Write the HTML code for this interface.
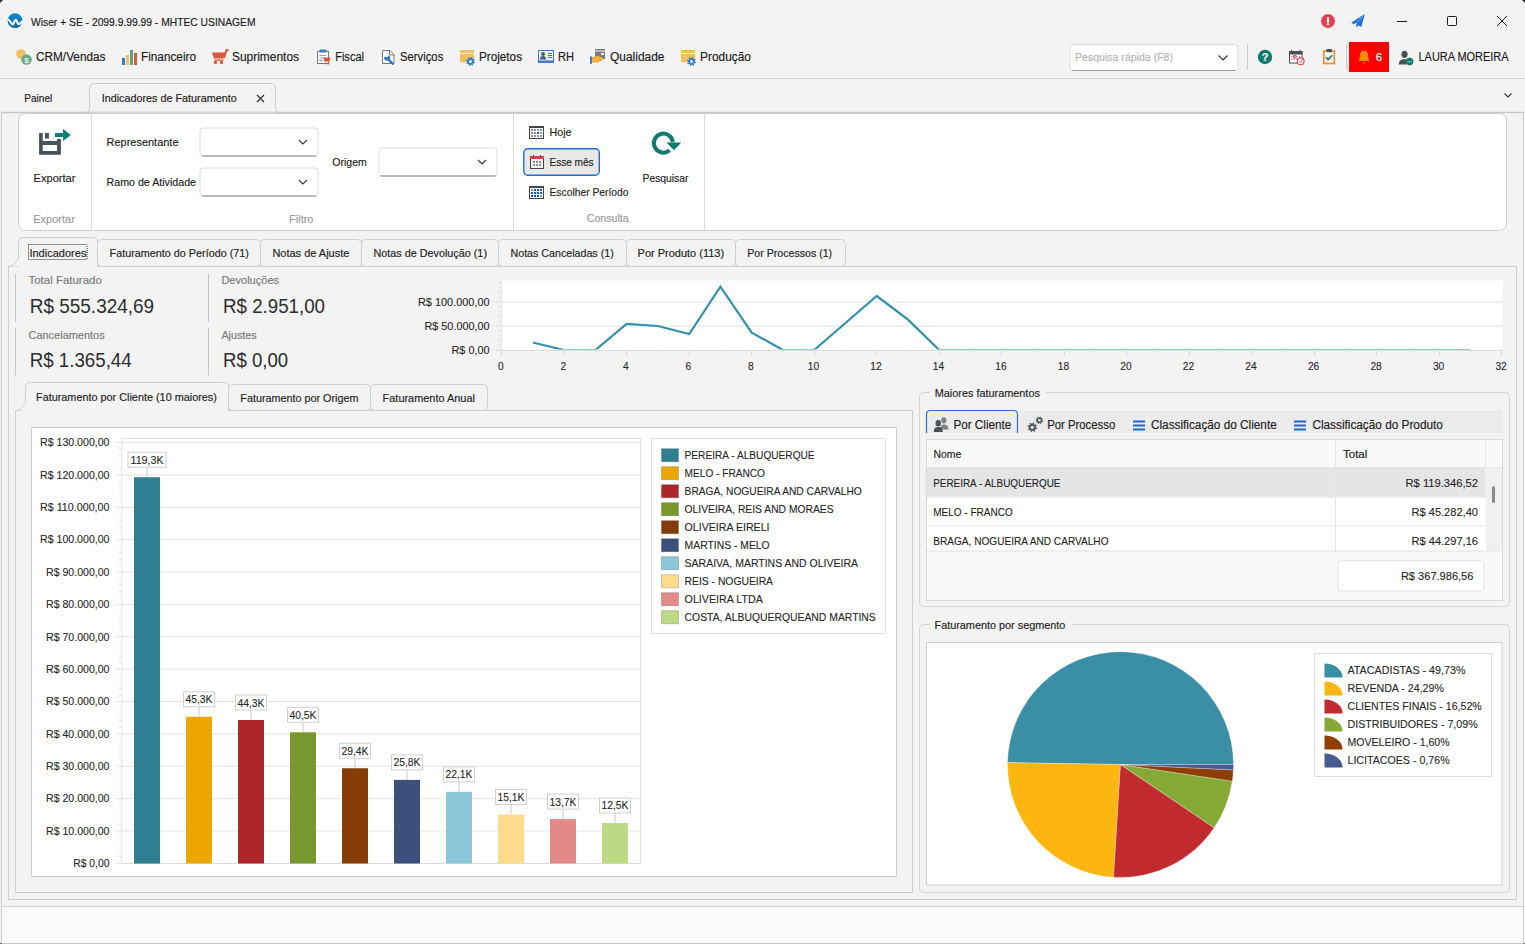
<!DOCTYPE html>
<html><head><meta charset="utf-8"><style>
html,body{margin:0;padding:0;background:#f3f3f3;overflow:hidden}
svg{display:block}
text{font-family:'Liberation Sans', sans-serif;white-space:pre}
</style></head><body>
<svg width="1525" height="944" viewBox="0 0 1525 944">
<rect x="0" y="0" width="1525" height="944" fill="#f3f3f3" />
<defs><linearGradient id="lg" x1="0" y1="0" x2="0" y2="1"><stop offset="0" stop-color="#0b8bd0"/><stop offset="1" stop-color="#0a66ad"/></linearGradient></defs>
<circle cx="15.05" cy="20.65" r="7.45" fill="url(#lg)"/>
<clipPath id="logoclip"><circle cx="15.05" cy="20.65" r="7.45"/></clipPath>
<path d="M7,19.6 C10.5,19 10.8,24.6 12.6,24.4 C14.3,24.2 14.3,19.6 15.8,19.7 C17.2,19.8 17.2,24.5 19,24.2 C20.5,24 21.5,22 23,20.5" fill="none" stroke="#fff" stroke-width="2.1" clip-path="url(#logoclip)"/>
<text x="31" y="26" font-size="11.4" fill="#1b1b1b" stroke="#1b1b1b" stroke-width="0.17" textLength="224.5" lengthAdjust="spacingAndGlyphs" >Wiser + SE - 2099.9.99.99 - MHTEC USINAGEM</text>
<circle cx="1328" cy="21" r="7" fill="#e0434f"/>
<rect x="1327" y="17.3" width="2" height="5.2" fill="#fff" />
<rect x="1327" y="23.3" width="2" height="1.8" fill="#fff" />
<path d="M1364.9,14 L1351.4,22.4 L1353.2,23.9 L1356.6,22.9 L1356.1,27.6 L1358.6,25.6 L1361.3,26.9 Z" fill="#1a73d9" />
<path d="M1356.6,22.6 L1363.5,16" fill="none" stroke="#cfe0f7" stroke-width="0.6" />
<line x1="1397" y1="21.5" x2="1407" y2="21.5" stroke="#1b1b1b" stroke-width="1" />
<rect x="1447.5" y="16.5" width="9" height="9" fill="none" stroke="#1b1b1b" stroke-width="1" rx="1" />
<line x1="1497" y1="16" x2="1507" y2="26" stroke="#1b1b1b" stroke-width="1" />
<line x1="1507" y1="16" x2="1497" y2="26" stroke="#1b1b1b" stroke-width="1" />
<circle cx="21" cy="54" r="4.8" fill="#f0c060"/>
<circle cx="26.5" cy="59.5" r="5.2" fill="#6aa88c"/>
<text x="26.5" y="62.5" font-size="8" fill="#fff" stroke="#fff" stroke-width="0.1" text-anchor="middle" >$</text>
<text x="36" y="61" font-size="12.5" fill="#1b1b1b" stroke="#1b1b1b" stroke-width="0.17" textLength="69.5" lengthAdjust="spacingAndGlyphs" >CRM/Vendas</text>
<rect x="122" y="58" width="3" height="7" fill="#3a78c0" />
<rect x="126" y="55" width="3" height="10" fill="#f0c060" />
<rect x="130" y="50" width="3" height="15" fill="#5fa080" />
<rect x="134" y="53" width="3" height="12" fill="#d9573b" />
<text x="141" y="61" font-size="12.5" fill="#1b1b1b" stroke="#1b1b1b" stroke-width="0.17" textLength="55" lengthAdjust="spacingAndGlyphs" >Financeiro</text>
<path d="M212,52.5 L225.5,52.5 L223.5,58.5 L214,58.5 Z" fill="#d9573b" />
<rect x="214.5" y="59.5" width="9" height="1.3" fill="#d9573b" />
<path d="M224,58 L226.5,50 L228.5,50" fill="none" stroke="#d9573b" stroke-width="2" />
<circle cx="215.5" cy="62.5" r="1.7" fill="#d9573b"/><circle cx="221.5" cy="62.5" r="1.7" fill="#d9573b"/>
<text x="232" y="61" font-size="12.5" fill="#1b1b1b" stroke="#1b1b1b" stroke-width="0.17" textLength="67" lengthAdjust="spacingAndGlyphs" >Suprimentos</text>
<rect x="317.5" y="51.5" width="11" height="12" fill="#fafafa" stroke="#7a7a7a" stroke-width="1" />
<rect x="319.5" y="49.5" width="7" height="3" fill="#3d7bc8" rx="0.8" />
<line x1="319.5" y1="55.5" x2="326" y2="55.5" stroke="#a0a0a0" stroke-width="1" />
<line x1="319.5" y1="58" x2="324" y2="58" stroke="#a0a0a0" stroke-width="1" />
<line x1="319.5" y1="60.5" x2="323" y2="60.5" stroke="#a0a0a0" stroke-width="1" />
<path d="M323.5,57.5 L330.5,57.5 L329.5,61.5 L324.5,61.5 Z" fill="#d9573b" />
<circle cx="325.5" cy="63.5" r="0.9" fill="#d9573b"/><circle cx="328.5" cy="63.5" r="0.9" fill="#d9573b"/>
<text x="335.2" y="61" font-size="12.5" fill="#1b1b1b" stroke="#1b1b1b" stroke-width="0.17" textLength="28.8" lengthAdjust="spacingAndGlyphs" >Fiscal</text>
<path d="M382.5,50.5 L390,50.5 L394,54.5 L394,63.5 L382.5,63.5 Z" fill="#fafafa" stroke="#7a7a7a" stroke-width="1" />
<path d="M389.5,50.5 L389.5,55 L394,55" fill="none" stroke="#7a7a7a" stroke-width="1" />
<path d="M387,58 L393.5,64.5" fill="none" stroke="#2f74c8" stroke-width="2.4" />
<path d="M384.2,57.2 A3,3 0 1 0 388.8,55.2 L387.2,57.6 L385.4,56.6 Z" fill="#2f74c8" />
<text x="400" y="61" font-size="12.5" fill="#1b1b1b" stroke="#1b1b1b" stroke-width="0.17" textLength="43.3" lengthAdjust="spacingAndGlyphs" >Serviços</text>
<rect x="460" y="50" width="14" height="3" fill="#f0c060" />
<rect x="460" y="53.8" width="14" height="8.4" fill="#f0c060" />
<polygon points="475.01,62.40 474.75,63.26 473.24,63.33 472.83,63.83 473.06,65.32 472.26,65.75 471.14,64.74 470.50,64.80 469.60,66.01 468.74,65.75 468.67,64.24 468.17,63.83 466.68,64.06 466.25,63.26 467.26,62.14 467.20,61.50 465.99,60.60 466.25,59.74 467.76,59.67 468.17,59.17 467.94,57.68 468.74,57.25 469.86,58.26 470.50,58.20 471.40,56.99 472.26,57.25 472.33,58.76 472.83,59.17 474.32,58.94 474.75,59.74 473.74,60.86 473.80,61.50" fill="#2f7fd0"/>
<circle cx="470.5" cy="61.5" r="1.5" fill="#f3f3f3"/>
<text x="479" y="61" font-size="12.5" fill="#1b1b1b" stroke="#1b1b1b" stroke-width="0.17" textLength="43" lengthAdjust="spacingAndGlyphs" >Projetos</text>
<rect x="538.5" y="50.5" width="15" height="12" fill="#e6eef9" stroke="#3d7bc8" stroke-width="1" />
<rect x="538" y="60.5" width="16" height="2.5" fill="#3d7bc8" />
<circle cx="543" cy="54" r="2" fill="#4d5b78"/>
<path d="M540,59.5 C540,56.5 541.5,56 543,56 C544.5,56 546,56.5 546,59.5 Z" fill="#4d5b78" />
<line x1="548" y1="53.5" x2="552" y2="53.5" stroke="#4d5b78" stroke-width="0.9" />
<line x1="548" y1="55.5" x2="552" y2="55.5" stroke="#4d5b78" stroke-width="0.9" />
<line x1="548" y1="57.5" x2="552" y2="57.5" stroke="#4d5b78" stroke-width="0.9" />
<text x="558" y="61" font-size="12.5" fill="#1b1b1b" stroke="#1b1b1b" stroke-width="0.17" textLength="16" lengthAdjust="spacingAndGlyphs" >RH</text>
<rect x="595" y="49" width="10" height="1.5" fill="#7a7a7a" />
<rect x="595" y="51.5" width="10" height="7.5" fill="#7a7a7a" />
<rect x="601" y="53" width="3" height="2" fill="#eee" />
<path d="M592,57 L598,56 L603,57.5 L603,60 L598,62.5 L592,62.5 Z" fill="#f0b040" />
<rect x="590" y="56.5" width="2" height="7.3" fill="#3d7bc8" />
<text x="610" y="61" font-size="12.5" fill="#1b1b1b" stroke="#1b1b1b" stroke-width="0.17" textLength="54.5" lengthAdjust="spacingAndGlyphs" >Qualidade</text>
<rect x="681" y="50" width="14" height="3" fill="#f0c060" />
<rect x="681" y="53.8" width="14" height="8.4" fill="#f0c060" />
<polygon points="696.01,62.40 695.75,63.26 694.24,63.33 693.83,63.83 694.06,65.32 693.26,65.75 692.14,64.74 691.50,64.80 690.60,66.01 689.74,65.75 689.67,64.24 689.17,63.83 687.68,64.06 687.25,63.26 688.26,62.14 688.20,61.50 686.99,60.60 687.25,59.74 688.76,59.67 689.17,59.17 688.94,57.68 689.74,57.25 690.86,58.26 691.50,58.20 692.40,56.99 693.26,57.25 693.33,58.76 693.83,59.17 695.32,58.94 695.75,59.74 694.74,60.86 694.80,61.50" fill="#2f7fd0"/>
<circle cx="691.5" cy="61.5" r="1.5" fill="#f3f3f3"/>
<text x="700" y="61" font-size="12.5" fill="#1b1b1b" stroke="#1b1b1b" stroke-width="0.17" textLength="51" lengthAdjust="spacingAndGlyphs" >Produção</text>
<rect x="1070" y="44.5" width="168" height="26" fill="#fff" stroke="#dadada" stroke-width="1" rx="3.5" />
<line x1="1072.5" y1="70.5" x2="1235.5" y2="70.5" stroke="#9c9c9c" stroke-width="1" />
<text x="1075" y="61" font-size="11.5" fill="#b3b3b3" stroke="#b3b3b3" stroke-width="0.17" textLength="98" lengthAdjust="spacingAndGlyphs" >Pesquisa rápida (F8)</text>
<path d="M1218.5,55.5 L1223,60 L1227.5,55.5" fill="none" stroke="#333" stroke-width="1.2" />
<line x1="1247.5" y1="44" x2="1247.5" y2="70" stroke="#c8c8c8" stroke-width="1" />
<circle cx="1265" cy="57" r="7.2" fill="#0e7b6c"/>
<text x="1265" y="61.3" font-size="11" fill="#fff" stroke="#fff" stroke-width="0.1" text-anchor="middle" font-weight="bold">?</text>
<rect x="1289.5" y="51.5" width="12.5" height="11.5" fill="#fff" stroke="#4a5055" stroke-width="1" />
<rect x="1289" y="51" width="13.5" height="3.5" fill="#4a5055" />
<rect x="1291" y="49.8" width="1" height="2" fill="#4a5055" />
<rect x="1299.5" y="49.8" width="1" height="2" fill="#4a5055" />
<rect x="1291.0" y="56.0" width="1.4" height="1.4" fill="#9a9ea2" />
<rect x="1293.6" y="56.0" width="1.4" height="1.4" fill="#9a9ea2" />
<rect x="1296.2" y="56.0" width="1.4" height="1.4" fill="#9a9ea2" />
<rect x="1298.8" y="56.0" width="1.4" height="1.4" fill="#9a9ea2" />
<rect x="1291.0" y="58.6" width="1.4" height="1.4" fill="#9a9ea2" />
<rect x="1293.6" y="58.6" width="1.4" height="1.4" fill="#9a9ea2" />
<rect x="1296.2" y="58.6" width="1.4" height="1.4" fill="#9a9ea2" />
<rect x="1298.8" y="58.6" width="1.4" height="1.4" fill="#9a9ea2" />
<rect x="1293.6" y="55.6" width="2.4" height="2.4" fill="none" stroke="#e04050" stroke-width="0.9" />
<circle cx="1300.7" cy="61.3" r="3.4" fill="#fff" stroke="#e8404f" stroke-width="1.1"/>
<path d="M1299.2,61.3 L1300.5,62.5 L1303.8,58.2" fill="none" stroke="#e8404f" stroke-width="0.9" />
<rect x="1323.8" y="51" width="10.5" height="12.5" fill="none" stroke="#f58a1f" stroke-width="1.6" />
<rect x="1326.4" y="49" width="5.6" height="3.2" fill="#4a5055" rx="1" />
<path d="M1325.8,57.2 L1328.2,59.6 L1332.2,55.2" fill="none" stroke="#0e7b6c" stroke-width="1.5" />
<line x1="1346.5" y1="44" x2="1346.5" y2="70" stroke="#c8c8c8" stroke-width="1" />
<rect x="1349" y="42" width="40" height="30" fill="#ff0000" />
<path d="M1358.2,61 C1359.8,59.5 1359.8,57.5 1359.8,55.5 C1359.8,52.5 1361.5,50.5 1364,50.5 C1366.5,50.5 1368.2,52.5 1368.2,55.5 C1368.2,57.5 1368.2,59.5 1369.8,61 Z" fill="#ff8c00" />
<rect x="1363" y="62.6" width="2" height="0.9" fill="#ff8c00" />
<text x="1375.8" y="60.8" font-size="11.5" fill="#fff" stroke="#fff" stroke-width="0.17" textLength="6.3" lengthAdjust="spacingAndGlyphs" >6</text>
<ellipse cx="1404.5" cy="54.3" rx="3.1" ry="3.6" fill="#4a5055"/>
<path d="M1398.8,64.5 C1398.8,61 1400.5,59.2 1404.5,59.2 C1407,59.2 1408,59.8 1408.5,60.5 L1406,64.5 Z" fill="#4a5055" />
<circle cx="1409.6" cy="61.6" r="3.8" fill="#0e7b6c"/>
<circle cx="1408.0" cy="61.8" r="0.55" fill="#fff"/>
<circle cx="1409.6" cy="61.8" r="0.55" fill="#fff"/>
<circle cx="1411.1999999999998" cy="61.8" r="0.55" fill="#fff"/>
<text x="1418.5" y="61" font-size="12.5" fill="#1b1b1b" stroke="#1b1b1b" stroke-width="0.17" textLength="90" lengthAdjust="spacingAndGlyphs" >LAURA MOREIRA</text>
<line x1="0" y1="78.5" x2="1525" y2="78.5" stroke="#d4d4d4" stroke-width="1" />
<text x="24.3" y="102" font-size="11.8" fill="#1b1b1b" stroke="#1b1b1b" stroke-width="0.17" textLength="28" lengthAdjust="spacingAndGlyphs" >Painel</text>
<path d="M85.5,112.5 Q89.5,112.5 89.5,108.5 L89.5,88.5 Q89.5,83.5 94.5,83.5 L270.5,83.5 Q275.5,83.5 275.5,88.5 L275.5,108.5 Q275.5,112.5 279.5,112.5" fill="#f3f3f3" stroke="#cdcdcd" stroke-width="1" />
<text x="101.7" y="102" font-size="11.8" fill="#1b1b1b" stroke="#1b1b1b" stroke-width="0.17" textLength="135" lengthAdjust="spacingAndGlyphs" >Indicadores de Faturamento</text>
<line x1="257" y1="95" x2="264" y2="102" stroke="#333" stroke-width="1.2" />
<line x1="264" y1="95" x2="257" y2="102" stroke="#333" stroke-width="1.2" />
<path d="M1504.5,93.5 L1508,97 L1511.5,93.5" fill="none" stroke="#333" stroke-width="1.1" />
<rect x="1.5" y="112.5" width="1522" height="794" fill="#f3f3f3" stroke="#cfcfcf" stroke-width="1" />
<line x1="1.5" y1="112.5" x2="1523.5" y2="112.5" stroke="#c8c8c8" stroke-width="1.5" />
<line x1="90" y1="112.5" x2="275" y2="112.5" stroke="#d8d8d8" stroke-width="1.5" />
<rect x="18.5" y="113.5" width="1488" height="117" fill="#fff" stroke="#cfcfcf" stroke-width="1" rx="7" />
<line x1="91.5" y1="114" x2="91.5" y2="230" stroke="#dadada" stroke-width="1" />
<line x1="513.5" y1="114" x2="513.5" y2="230" stroke="#dadada" stroke-width="1" />
<line x1="704.5" y1="114" x2="704.5" y2="230" stroke="#dadada" stroke-width="1" />
<path d="M55,133.1 L63,133.1 L63,128.9 L70.9,135 L63,141 L63,137 L55,137 Z" fill="#0a8272" />
<path d="M39.1,132.9 L42.7,132.9 L42.7,141 L57.1,141 L57.1,139.1 L60.9,139.1 L60.9,154.7 L39.1,154.7 Z M42.7,145 L42.7,151.1 L57.1,151.1 L57.1,145 Z" fill="#48525a" fill-rule="evenodd"/>
<rect x="45" y="132.9" width="3.9" height="5.7" fill="#48525a" />
<text x="33.5" y="182.4" font-size="11.5" fill="#1f1f1f" stroke="#1f1f1f" stroke-width="0.17" textLength="42" lengthAdjust="spacingAndGlyphs" >Exportar</text>
<text x="33.3" y="223.3" font-size="11.5" fill="#9a9a9a" stroke="#9a9a9a" stroke-width="0.17" textLength="41.5" lengthAdjust="spacingAndGlyphs" >Exportar</text>
<text x="106.5" y="146" font-size="11.5" fill="#1f1f1f" stroke="#1f1f1f" stroke-width="0.17" textLength="72" lengthAdjust="spacingAndGlyphs" >Representante</text>
<text x="106.5" y="186" font-size="11.5" fill="#1f1f1f" stroke="#1f1f1f" stroke-width="0.17" textLength="89.5" lengthAdjust="spacingAndGlyphs" >Ramo de Atividade</text>
<text x="332.3" y="166.4" font-size="11.5" fill="#1f1f1f" stroke="#1f1f1f" stroke-width="0.17" textLength="34.5" lengthAdjust="spacingAndGlyphs" >Origem</text>
<text x="289" y="223" font-size="11.5" fill="#9a9a9a" stroke="#9a9a9a" stroke-width="0.17" textLength="24.5" lengthAdjust="spacingAndGlyphs" >Filtro</text>
<rect x="200.0" y="128.0" width="118.0" height="28.0" fill="#fff" stroke="#dcdcdc" stroke-width="1" rx="3" />
<line x1="201.5" y1="156.0" x2="316.5" y2="156.0" stroke="#8c8c8c" stroke-width="1" />
<path d="M299.0,140.0 L303.0,144.0 L307.0,140.0" fill="none" stroke="#333" stroke-width="1.1" />
<rect x="200.0" y="168.0" width="118.0" height="28.0" fill="#fff" stroke="#dcdcdc" stroke-width="1" rx="3" />
<line x1="201.5" y1="196.0" x2="316.5" y2="196.0" stroke="#8c8c8c" stroke-width="1" />
<path d="M299.0,180.0 L303.0,184.0 L307.0,180.0" fill="none" stroke="#333" stroke-width="1.1" />
<rect x="379.0" y="148.0" width="118.0" height="28.0" fill="#fff" stroke="#dcdcdc" stroke-width="1" rx="3" />
<line x1="380.5" y1="176.0" x2="495.5" y2="176.0" stroke="#8c8c8c" stroke-width="1" />
<path d="M478.0,160.0 L482.0,164.0 L486.0,160.0" fill="none" stroke="#333" stroke-width="1.1" />
<rect x="529" y="126" width="15" height="13" fill="#fff" />
<rect x="529" y="126" width="15" height="2" fill="#3f474d" />
<rect x="529" y="126" width="1" height="13" fill="#3f474d" />
<rect x="543" y="126" width="1" height="13" fill="#3f474d" />
<rect x="529" y="138" width="15" height="1" fill="#3f474d" />
<rect x="531" y="129" width="2" height="2" fill="#8f9396" />
<rect x="534" y="129" width="2" height="2" fill="#8f9396" />
<rect x="537" y="129" width="2" height="2" fill="#8f9396" />
<rect x="540" y="129" width="2" height="2" fill="#8f9396" />
<rect x="531" y="132" width="2" height="2" fill="#8f9396" />
<rect x="534" y="132" width="2" height="2" fill="#8f9396" />
<rect x="537" y="132" width="2" height="2" fill="#0a5ad6" />
<rect x="540" y="132" width="2" height="2" fill="#8f9396" />
<rect x="531" y="135" width="2" height="2" fill="#8f9396" />
<rect x="534" y="135" width="2" height="2" fill="#8f9396" />
<rect x="537" y="135" width="2" height="2" fill="#8f9396" />
<rect x="540" y="135" width="2" height="2" fill="#8f9396" />
<rect x="523.8" y="148.8" width="75.5" height="26.5" fill="#e8e8e8" stroke="#1f6fd0" stroke-width="1.4" rx="4" />
<rect x="530" y="159" width="14" height="10" fill="#f2f2f2" />
<rect x="530" y="159" width="1" height="10" fill="#3f474d" />
<rect x="543" y="159" width="1" height="10" fill="#3f474d" />
<rect x="530" y="168" width="14" height="1" fill="#3f474d" />
<rect x="530" y="156" width="14" height="3" fill="#e8384d" />
<rect x="533" y="155" width="1" height="2" fill="#3f474d" />
<rect x="540" y="155" width="1" height="2" fill="#3f474d" />
<rect x="533" y="161" width="2" height="2" fill="#8f9396" />
<rect x="536" y="161" width="2" height="2" fill="#8f9396" />
<rect x="539" y="161" width="2" height="2" fill="#8f9396" />
<rect x="533" y="164" width="2" height="2" fill="#8f9396" />
<rect x="536" y="164" width="2" height="2" fill="#8f9396" />
<rect x="539" y="164" width="2" height="2" fill="#8f9396" />
<rect x="529" y="186" width="15" height="13" fill="#fff" />
<rect x="529" y="186" width="15" height="2" fill="#3f474d" />
<rect x="529" y="186" width="1" height="13" fill="#3f474d" />
<rect x="543" y="186" width="1" height="13" fill="#3f474d" />
<rect x="529" y="198" width="15" height="1" fill="#3f474d" />
<rect x="531" y="189" width="2" height="2" fill="#8f9396" />
<rect x="534" y="189" width="2" height="2" fill="#0a5ad6" />
<rect x="537" y="189" width="2" height="2" fill="#0a5ad6" />
<rect x="540" y="189" width="2" height="2" fill="#0a5ad6" />
<rect x="531" y="192" width="2" height="2" fill="#0a5ad6" />
<rect x="534" y="192" width="2" height="2" fill="#0a5ad6" />
<rect x="537" y="192" width="2" height="2" fill="#0a5ad6" />
<rect x="540" y="192" width="2" height="2" fill="#0a5ad6" />
<rect x="531" y="195" width="2" height="2" fill="#0a5ad6" />
<rect x="534" y="195" width="2" height="2" fill="#0a5ad6" />
<rect x="537" y="195" width="2" height="2" fill="#0a5ad6" />
<rect x="540" y="195" width="2" height="2" fill="#8f9396" />
<text x="549.5" y="136.2" font-size="11.5" fill="#1f1f1f" stroke="#1f1f1f" stroke-width="0.17" textLength="22" lengthAdjust="spacingAndGlyphs" >Hoje</text>
<text x="549.5" y="166.4" font-size="11.5" fill="#1f1f1f" stroke="#1f1f1f" stroke-width="0.17" textLength="44" lengthAdjust="spacingAndGlyphs" >Esse mês</text>
<text x="549.5" y="196" font-size="11.5" fill="#1f1f1f" stroke="#1f1f1f" stroke-width="0.17" textLength="79" lengthAdjust="spacingAndGlyphs" >Escolher Período</text>
<path d="M669.6,150.3 A9.5,9.5 0 1 1 672.8,142" fill="none" stroke="#0e7b6c" stroke-width="4" />
<path d="M666.5,142.5 L681.2,142.5 L674,150.2 Z" fill="#0e7b6c" />
<text x="642.6" y="182" font-size="11.5" fill="#1f1f1f" stroke="#1f1f1f" stroke-width="0.17" textLength="45.8" lengthAdjust="spacingAndGlyphs" >Pesquisar</text>
<text x="586.8" y="222.3" font-size="11.5" fill="#9a9a9a" stroke="#9a9a9a" stroke-width="0.17" textLength="41.8" lengthAdjust="spacingAndGlyphs" >Consulta</text>
<rect x="8.5" y="266.5" width="1508" height="633" fill="#f3f3f3" stroke="#cfcfcf" stroke-width="1" />
<rect x="97.5" y="239.5" width="163.0" height="27.0" fill="#f3f3f3" stroke="#cfcfcf" stroke-width="1" rx="4" />
<text x="109.6" y="256.8" font-size="11.3" fill="#1f1f1f" stroke="#1f1f1f" stroke-width="0.17" textLength="139.3" lengthAdjust="spacingAndGlyphs" >Faturamento do Período (71)</text>
<rect x="260.5" y="239.5" width="101.0" height="27.0" fill="#f3f3f3" stroke="#cfcfcf" stroke-width="1" rx="4" />
<text x="272.4" y="256.8" font-size="11.3" fill="#1f1f1f" stroke="#1f1f1f" stroke-width="0.17" textLength="77" lengthAdjust="spacingAndGlyphs" >Notas de Ajuste</text>
<rect x="361.5" y="239.5" width="137.0" height="27.0" fill="#f3f3f3" stroke="#cfcfcf" stroke-width="1" rx="4" />
<text x="373.4" y="256.8" font-size="11.3" fill="#1f1f1f" stroke="#1f1f1f" stroke-width="0.17" textLength="113.6" lengthAdjust="spacingAndGlyphs" >Notas de Devolução (1)</text>
<rect x="498.5" y="239.5" width="128.0" height="27.0" fill="#f3f3f3" stroke="#cfcfcf" stroke-width="1" rx="4" />
<text x="510.5" y="256.8" font-size="11.3" fill="#1f1f1f" stroke="#1f1f1f" stroke-width="0.17" textLength="103.2" lengthAdjust="spacingAndGlyphs" >Notas Canceladas (1)</text>
<rect x="626.5" y="239.5" width="109.0" height="27.0" fill="#f3f3f3" stroke="#cfcfcf" stroke-width="1" rx="4" />
<text x="637.6" y="256.8" font-size="11.3" fill="#1f1f1f" stroke="#1f1f1f" stroke-width="0.17" textLength="86.5" lengthAdjust="spacingAndGlyphs" >Por Produto (113)</text>
<rect x="735.5" y="239.5" width="110.0" height="27.0" fill="#f3f3f3" stroke="#cfcfcf" stroke-width="1" rx="4" />
<text x="747.3" y="256.8" font-size="11.3" fill="#1f1f1f" stroke="#1f1f1f" stroke-width="0.17" textLength="84.8" lengthAdjust="spacingAndGlyphs" >Por Processos (1)</text>
<path d="M8.5,266.5 Q12.5,266.5 16,262 L18.5,258 L18.5,242.5 Q18.5,237.5 23.5,237.5 L92.5,237.5 Q97.5,237.5 97.5,242.5 L97.5,266.5" fill="#f3f3f3" stroke="#cfcfcf" stroke-width="1" />
<rect x="19.0" y="262" width="78" height="5" fill="#f3f3f3" />
<text x="29.4" y="256.6" font-size="11.3" fill="#1f1f1f" stroke="#1f1f1f" stroke-width="0.17" textLength="57" lengthAdjust="spacingAndGlyphs" >Indicadores</text>
<rect x="28.5" y="244.5" width="58.5" height="15" fill="none" stroke="#333" stroke-width="1" stroke-dasharray="1,1"/>
<line x1="15.5" y1="273.5" x2="15.5" y2="322" stroke="#c4c4c4" stroke-width="1" />
<line x1="15.5" y1="328" x2="15.5" y2="375.5" stroke="#c4c4c4" stroke-width="1" />
<line x1="208.5" y1="273.5" x2="208.5" y2="322" stroke="#c4c4c4" stroke-width="1" />
<line x1="208.5" y1="328" x2="208.5" y2="375.5" stroke="#c4c4c4" stroke-width="1" />
<text x="28.5" y="284.4" font-size="11.5" fill="#7a7a7a" stroke="#7a7a7a" stroke-width="0.17" textLength="73.3" lengthAdjust="spacingAndGlyphs" >Total Faturado</text>
<text x="28.5" y="339" font-size="11.5" fill="#7a7a7a" stroke="#7a7a7a" stroke-width="0.17" textLength="76.2" lengthAdjust="spacingAndGlyphs" >Cancelamentos</text>
<text x="221.4" y="284.4" font-size="11.5" fill="#7a7a7a" stroke="#7a7a7a" stroke-width="0.17" textLength="57.7" lengthAdjust="spacingAndGlyphs" >Devoluções</text>
<text x="221.4" y="339" font-size="11.5" fill="#7a7a7a" stroke="#7a7a7a" stroke-width="0.17" textLength="35.3" lengthAdjust="spacingAndGlyphs" >Ajustes</text>
<text x="29.7" y="313" font-size="20" fill="#2e2e2e" textLength="124.5" lengthAdjust="spacingAndGlyphs" >R$ 555.324,69</text>
<text x="29.7" y="367.1" font-size="20" fill="#2e2e2e" textLength="102" lengthAdjust="spacingAndGlyphs" >R$ 1.365,44</text>
<text x="223" y="313" font-size="20" fill="#2e2e2e" textLength="102" lengthAdjust="spacingAndGlyphs" >R$ 2.951,00</text>
<text x="223" y="367.1" font-size="20" fill="#2e2e2e" textLength="65.2" lengthAdjust="spacingAndGlyphs" >R$ 0,00</text>
<rect x="501.5" y="280.5" width="1001" height="69.5" fill="#fff" />
<line x1="501.5" y1="326.0" x2="1502.5" y2="326.0" stroke="#e2e2e2" stroke-width="1" />
<line x1="501.5" y1="302.0" x2="1502.5" y2="302.0" stroke="#e2e2e2" stroke-width="1" />
<line x1="497" y1="350.5" x2="1502.5" y2="350.5" stroke="#dcdcdc" stroke-width="1" />
<line x1="501.5" y1="280.5" x2="501.5" y2="356" stroke="#e0e0e0" stroke-width="1" />
<line x1="495" y1="350.0" x2="501.5" y2="350.0" stroke="#e0e0e0" stroke-width="1" />
<line x1="497.5" y1="345.2" x2="501.5" y2="345.2" stroke="#e0e0e0" stroke-width="1" />
<line x1="497.5" y1="340.4" x2="501.5" y2="340.4" stroke="#e0e0e0" stroke-width="1" />
<line x1="497.5" y1="335.6" x2="501.5" y2="335.6" stroke="#e0e0e0" stroke-width="1" />
<line x1="497.5" y1="330.8" x2="501.5" y2="330.8" stroke="#e0e0e0" stroke-width="1" />
<line x1="495" y1="326.0" x2="501.5" y2="326.0" stroke="#e0e0e0" stroke-width="1" />
<line x1="497.5" y1="321.2" x2="501.5" y2="321.2" stroke="#e0e0e0" stroke-width="1" />
<line x1="497.5" y1="316.4" x2="501.5" y2="316.4" stroke="#e0e0e0" stroke-width="1" />
<line x1="497.5" y1="311.6" x2="501.5" y2="311.6" stroke="#e0e0e0" stroke-width="1" />
<line x1="497.5" y1="306.8" x2="501.5" y2="306.8" stroke="#e0e0e0" stroke-width="1" />
<line x1="495" y1="302.0" x2="501.5" y2="302.0" stroke="#e0e0e0" stroke-width="1" />
<line x1="497.5" y1="297.2" x2="501.5" y2="297.2" stroke="#e0e0e0" stroke-width="1" />
<line x1="497.5" y1="292.4" x2="501.5" y2="292.4" stroke="#e0e0e0" stroke-width="1" />
<line x1="497.5" y1="287.6" x2="501.5" y2="287.6" stroke="#e0e0e0" stroke-width="1" />
<line x1="497.5" y1="282.8" x2="501.5" y2="282.8" stroke="#e0e0e0" stroke-width="1" />
<line x1="501.5" y1="350.5" x2="501.5" y2="356" stroke="#dcdcdc" stroke-width="1" />
<line x1="532.5" y1="350.5" x2="532.5" y2="353" stroke="#dcdcdc" stroke-width="1" />
<line x1="564.5" y1="350.5" x2="564.5" y2="356" stroke="#dcdcdc" stroke-width="1" />
<line x1="595.5" y1="350.5" x2="595.5" y2="353" stroke="#dcdcdc" stroke-width="1" />
<line x1="626.5" y1="350.5" x2="626.5" y2="356" stroke="#dcdcdc" stroke-width="1" />
<line x1="657.5" y1="350.5" x2="657.5" y2="353" stroke="#dcdcdc" stroke-width="1" />
<line x1="689.5" y1="350.5" x2="689.5" y2="356" stroke="#dcdcdc" stroke-width="1" />
<line x1="720.5" y1="350.5" x2="720.5" y2="353" stroke="#dcdcdc" stroke-width="1" />
<line x1="751.5" y1="350.5" x2="751.5" y2="356" stroke="#dcdcdc" stroke-width="1" />
<line x1="782.5" y1="350.5" x2="782.5" y2="353" stroke="#dcdcdc" stroke-width="1" />
<line x1="814.5" y1="350.5" x2="814.5" y2="356" stroke="#dcdcdc" stroke-width="1" />
<line x1="845.5" y1="350.5" x2="845.5" y2="353" stroke="#dcdcdc" stroke-width="1" />
<line x1="876.5" y1="350.5" x2="876.5" y2="356" stroke="#dcdcdc" stroke-width="1" />
<line x1="907.5" y1="350.5" x2="907.5" y2="353" stroke="#dcdcdc" stroke-width="1" />
<line x1="939.5" y1="350.5" x2="939.5" y2="356" stroke="#dcdcdc" stroke-width="1" />
<line x1="970.5" y1="350.5" x2="970.5" y2="353" stroke="#dcdcdc" stroke-width="1" />
<line x1="1001.5" y1="350.5" x2="1001.5" y2="356" stroke="#dcdcdc" stroke-width="1" />
<line x1="1033.5" y1="350.5" x2="1033.5" y2="353" stroke="#dcdcdc" stroke-width="1" />
<line x1="1064.5" y1="350.5" x2="1064.5" y2="356" stroke="#dcdcdc" stroke-width="1" />
<line x1="1095.5" y1="350.5" x2="1095.5" y2="353" stroke="#dcdcdc" stroke-width="1" />
<line x1="1126.5" y1="350.5" x2="1126.5" y2="356" stroke="#dcdcdc" stroke-width="1" />
<line x1="1158.5" y1="350.5" x2="1158.5" y2="353" stroke="#dcdcdc" stroke-width="1" />
<line x1="1189.5" y1="350.5" x2="1189.5" y2="356" stroke="#dcdcdc" stroke-width="1" />
<line x1="1220.5" y1="350.5" x2="1220.5" y2="353" stroke="#dcdcdc" stroke-width="1" />
<line x1="1251.5" y1="350.5" x2="1251.5" y2="356" stroke="#dcdcdc" stroke-width="1" />
<line x1="1283.5" y1="350.5" x2="1283.5" y2="353" stroke="#dcdcdc" stroke-width="1" />
<line x1="1314.5" y1="350.5" x2="1314.5" y2="356" stroke="#dcdcdc" stroke-width="1" />
<line x1="1345.5" y1="350.5" x2="1345.5" y2="353" stroke="#dcdcdc" stroke-width="1" />
<line x1="1376.5" y1="350.5" x2="1376.5" y2="356" stroke="#dcdcdc" stroke-width="1" />
<line x1="1408.5" y1="350.5" x2="1408.5" y2="353" stroke="#dcdcdc" stroke-width="1" />
<line x1="1439.5" y1="350.5" x2="1439.5" y2="356" stroke="#dcdcdc" stroke-width="1" />
<line x1="1470.5" y1="350.5" x2="1470.5" y2="353" stroke="#dcdcdc" stroke-width="1" />
<line x1="1501.5" y1="350.5" x2="1501.5" y2="356" stroke="#dcdcdc" stroke-width="1" />
<text x="489.5" y="305.8" font-size="11" fill="#262626" stroke="#262626" stroke-width="0.1" text-anchor="end" textLength="71.5" lengthAdjust="spacingAndGlyphs" >R$ 100.000,00</text>
<text x="489.5" y="330.1" font-size="11" fill="#262626" stroke="#262626" stroke-width="0.1" text-anchor="end" textLength="65" lengthAdjust="spacingAndGlyphs" >R$ 50.000,00</text>
<text x="489.5" y="354.2" font-size="11" fill="#262626" stroke="#262626" stroke-width="0.1" text-anchor="end" textLength="38" lengthAdjust="spacingAndGlyphs" >R$ 0,00</text>
<text x="500.8" y="369.5" font-size="10.2" fill="#262626" stroke="#262626" stroke-width="0.1" text-anchor="middle" >0</text>
<text x="563.32" y="369.5" font-size="10.2" fill="#262626" stroke="#262626" stroke-width="0.1" text-anchor="middle" >2</text>
<text x="625.84" y="369.5" font-size="10.2" fill="#262626" stroke="#262626" stroke-width="0.1" text-anchor="middle" >4</text>
<text x="688.3600000000001" y="369.5" font-size="10.2" fill="#262626" stroke="#262626" stroke-width="0.1" text-anchor="middle" >6</text>
<text x="750.8800000000001" y="369.5" font-size="10.2" fill="#262626" stroke="#262626" stroke-width="0.1" text-anchor="middle" >8</text>
<text x="813.4000000000001" y="369.5" font-size="10.2" fill="#262626" stroke="#262626" stroke-width="0.1" text-anchor="middle" >10</text>
<text x="875.9200000000001" y="369.5" font-size="10.2" fill="#262626" stroke="#262626" stroke-width="0.1" text-anchor="middle" >12</text>
<text x="938.44" y="369.5" font-size="10.2" fill="#262626" stroke="#262626" stroke-width="0.1" text-anchor="middle" >14</text>
<text x="1000.96" y="369.5" font-size="10.2" fill="#262626" stroke="#262626" stroke-width="0.1" text-anchor="middle" >16</text>
<text x="1063.4800000000002" y="369.5" font-size="10.2" fill="#262626" stroke="#262626" stroke-width="0.1" text-anchor="middle" >18</text>
<text x="1126.0000000000002" y="369.5" font-size="10.2" fill="#262626" stroke="#262626" stroke-width="0.1" text-anchor="middle" >20</text>
<text x="1188.5200000000002" y="369.5" font-size="10.2" fill="#262626" stroke="#262626" stroke-width="0.1" text-anchor="middle" >22</text>
<text x="1251.0400000000002" y="369.5" font-size="10.2" fill="#262626" stroke="#262626" stroke-width="0.1" text-anchor="middle" >24</text>
<text x="1313.5600000000002" y="369.5" font-size="10.2" fill="#262626" stroke="#262626" stroke-width="0.1" text-anchor="middle" >26</text>
<text x="1376.0800000000002" y="369.5" font-size="10.2" fill="#262626" stroke="#262626" stroke-width="0.1" text-anchor="middle" >28</text>
<text x="1438.6000000000001" y="369.5" font-size="10.2" fill="#262626" stroke="#262626" stroke-width="0.1" text-anchor="middle" >30</text>
<text x="1501.1200000000001" y="369.5" font-size="10.2" fill="#262626" stroke="#262626" stroke-width="0.1" text-anchor="middle" >32</text>
<clipPath id="lcclip"><rect x="501.5" y="280" width="1001" height="69.5"/></clipPath>
<polyline points="532.9,342.5 564.1,350.0 595.4,350.0 626.6,323.8 657.9,326.0 689.2,334.0 720.4,286.7 751.7,332.6 782.9,350.0 814.2,350.0 845.5,323.0 876.7,296.0 908.0,319.7 939.2,350.0 970.5,350.0 1001.8,350.0 1033.0,350.0 1064.3,350.0 1095.5,350.0 1126.8,350.0 1158.1,350.0 1189.3,350.0 1220.6,350.0 1251.8,350.0 1283.1,350.0 1314.4,350.0 1345.6,350.0 1376.9,350.0 1408.1,350.0 1439.4,350.0 1470.7,350.0" fill="none" stroke="#3591ab" stroke-width="2.2" stroke-linejoin="miter" clip-path="url(#lcclip)"/>
<rect x="15.5" y="410.5" width="897" height="482" fill="#f3f3f3" stroke="#cfcfcf" stroke-width="1" />
<rect x="228.5" y="384.5" width="142.0" height="26.0" fill="#f3f3f3" stroke="#cfcfcf" stroke-width="1" rx="4" />
<text x="240.3" y="402.2" font-size="11.5" fill="#1f1f1f" stroke="#1f1f1f" stroke-width="0.17" textLength="118.2" lengthAdjust="spacingAndGlyphs" >Faturamento por Origem</text>
<rect x="370.5" y="384.5" width="117.0" height="26.0" fill="#f3f3f3" stroke="#cfcfcf" stroke-width="1" rx="4" />
<text x="382.6" y="402.2" font-size="11.5" fill="#1f1f1f" stroke="#1f1f1f" stroke-width="0.17" textLength="92.3" lengthAdjust="spacingAndGlyphs" >Faturamento Anual</text>
<path d="M15.5,410.5 Q19.5,410.5 22.5,406.5 L25.5,402.5 L25.5,387.5 Q25.5,382.5 30.5,382.5 L223.5,382.5 Q228.5,382.5 228.5,387.5 L228.5,410.5" fill="#f3f3f3" stroke="#cfcfcf" stroke-width="1" />
<rect x="26" y="406" width="202" height="5" fill="#f3f3f3" />
<text x="36" y="401.2" font-size="11.5" fill="#1f1f1f" stroke="#1f1f1f" stroke-width="0.17" textLength="180.9" lengthAdjust="spacingAndGlyphs" >Faturamento por Cliente (10 maiores)</text>
<rect x="31.5" y="427.5" width="865" height="449" fill="#fff" stroke="#cdcdcd" stroke-width="1" />
<line x1="121.5" y1="438.5" x2="640.5" y2="438.5" stroke="#e3e3e3" stroke-width="1" />
<line x1="640.5" y1="438.5" x2="640.5" y2="863.5" stroke="#e3e3e3" stroke-width="1" />
<line x1="116" y1="863.4" x2="640.5" y2="863.4" stroke="#e3e3e3" stroke-width="1" />
<text x="109.5" y="867.1" font-size="11" fill="#262626" stroke="#262626" stroke-width="0.1" text-anchor="end" textLength="36.3" lengthAdjust="spacingAndGlyphs" >R$ 0,00</text>
<line x1="116" y1="831.03" x2="640.5" y2="831.03" stroke="#e3e3e3" stroke-width="1" />
<text x="109.5" y="834.73" font-size="11" fill="#262626" stroke="#262626" stroke-width="0.1" text-anchor="end" textLength="63.5" lengthAdjust="spacingAndGlyphs" >R$ 10.000,00</text>
<line x1="116" y1="798.66" x2="640.5" y2="798.66" stroke="#e3e3e3" stroke-width="1" />
<text x="109.5" y="802.36" font-size="11" fill="#262626" stroke="#262626" stroke-width="0.1" text-anchor="end" textLength="63.5" lengthAdjust="spacingAndGlyphs" >R$ 20.000,00</text>
<line x1="116" y1="766.29" x2="640.5" y2="766.29" stroke="#e3e3e3" stroke-width="1" />
<text x="109.5" y="769.99" font-size="11" fill="#262626" stroke="#262626" stroke-width="0.1" text-anchor="end" textLength="63.5" lengthAdjust="spacingAndGlyphs" >R$ 30.000,00</text>
<line x1="116" y1="733.92" x2="640.5" y2="733.92" stroke="#e3e3e3" stroke-width="1" />
<text x="109.5" y="737.62" font-size="11" fill="#262626" stroke="#262626" stroke-width="0.1" text-anchor="end" textLength="63.5" lengthAdjust="spacingAndGlyphs" >R$ 40.000,00</text>
<line x1="116" y1="701.55" x2="640.5" y2="701.55" stroke="#e3e3e3" stroke-width="1" />
<text x="109.5" y="705.25" font-size="11" fill="#262626" stroke="#262626" stroke-width="0.1" text-anchor="end" textLength="63.5" lengthAdjust="spacingAndGlyphs" >R$ 50.000,00</text>
<line x1="116" y1="669.18" x2="640.5" y2="669.18" stroke="#e3e3e3" stroke-width="1" />
<text x="109.5" y="672.88" font-size="11" fill="#262626" stroke="#262626" stroke-width="0.1" text-anchor="end" textLength="63.5" lengthAdjust="spacingAndGlyphs" >R$ 60.000,00</text>
<line x1="116" y1="636.81" x2="640.5" y2="636.81" stroke="#e3e3e3" stroke-width="1" />
<text x="109.5" y="640.51" font-size="11" fill="#262626" stroke="#262626" stroke-width="0.1" text-anchor="end" textLength="63.5" lengthAdjust="spacingAndGlyphs" >R$ 70.000,00</text>
<line x1="116" y1="604.44" x2="640.5" y2="604.44" stroke="#e3e3e3" stroke-width="1" />
<text x="109.5" y="608.1400000000001" font-size="11" fill="#262626" stroke="#262626" stroke-width="0.1" text-anchor="end" textLength="63.5" lengthAdjust="spacingAndGlyphs" >R$ 80.000,00</text>
<line x1="116" y1="572.0699999999999" x2="640.5" y2="572.0699999999999" stroke="#e3e3e3" stroke-width="1" />
<text x="109.5" y="575.77" font-size="11" fill="#262626" stroke="#262626" stroke-width="0.1" text-anchor="end" textLength="63.5" lengthAdjust="spacingAndGlyphs" >R$ 90.000,00</text>
<line x1="116" y1="539.7" x2="640.5" y2="539.7" stroke="#e3e3e3" stroke-width="1" />
<text x="109.5" y="543.4000000000001" font-size="11" fill="#262626" stroke="#262626" stroke-width="0.1" text-anchor="end" textLength="69.5" lengthAdjust="spacingAndGlyphs" >R$ 100.000,00</text>
<line x1="116" y1="507.33" x2="640.5" y2="507.33" stroke="#e3e3e3" stroke-width="1" />
<text x="109.5" y="511.03" font-size="11" fill="#262626" stroke="#262626" stroke-width="0.1" text-anchor="end" textLength="69.5" lengthAdjust="spacingAndGlyphs" >R$ 110.000,00</text>
<line x1="116" y1="474.96" x2="640.5" y2="474.96" stroke="#e3e3e3" stroke-width="1" />
<text x="109.5" y="478.65999999999997" font-size="11" fill="#262626" stroke="#262626" stroke-width="0.1" text-anchor="end" textLength="69.5" lengthAdjust="spacingAndGlyphs" >R$ 120.000,00</text>
<line x1="116" y1="442.59" x2="640.5" y2="442.59" stroke="#e3e3e3" stroke-width="1" />
<text x="109.5" y="446.28999999999996" font-size="11" fill="#262626" stroke="#262626" stroke-width="0.1" text-anchor="end" textLength="69.5" lengthAdjust="spacingAndGlyphs" >R$ 130.000,00</text>
<line x1="119" y1="856.9259999999999" x2="121.8" y2="856.9259999999999" stroke="#e3e3e3" stroke-width="1" />
<line x1="119" y1="850.452" x2="121.8" y2="850.452" stroke="#e3e3e3" stroke-width="1" />
<line x1="119" y1="843.978" x2="121.8" y2="843.978" stroke="#e3e3e3" stroke-width="1" />
<line x1="119" y1="837.504" x2="121.8" y2="837.504" stroke="#e3e3e3" stroke-width="1" />
<line x1="119" y1="824.5559999999999" x2="121.8" y2="824.5559999999999" stroke="#e3e3e3" stroke-width="1" />
<line x1="119" y1="818.082" x2="121.8" y2="818.082" stroke="#e3e3e3" stroke-width="1" />
<line x1="119" y1="811.608" x2="121.8" y2="811.608" stroke="#e3e3e3" stroke-width="1" />
<line x1="119" y1="805.134" x2="121.8" y2="805.134" stroke="#e3e3e3" stroke-width="1" />
<line x1="119" y1="792.1859999999999" x2="121.8" y2="792.1859999999999" stroke="#e3e3e3" stroke-width="1" />
<line x1="119" y1="785.712" x2="121.8" y2="785.712" stroke="#e3e3e3" stroke-width="1" />
<line x1="119" y1="779.2379999999999" x2="121.8" y2="779.2379999999999" stroke="#e3e3e3" stroke-width="1" />
<line x1="119" y1="772.764" x2="121.8" y2="772.764" stroke="#e3e3e3" stroke-width="1" />
<line x1="119" y1="759.816" x2="121.8" y2="759.816" stroke="#e3e3e3" stroke-width="1" />
<line x1="119" y1="753.342" x2="121.8" y2="753.342" stroke="#e3e3e3" stroke-width="1" />
<line x1="119" y1="746.8679999999999" x2="121.8" y2="746.8679999999999" stroke="#e3e3e3" stroke-width="1" />
<line x1="119" y1="740.394" x2="121.8" y2="740.394" stroke="#e3e3e3" stroke-width="1" />
<line x1="119" y1="727.4459999999999" x2="121.8" y2="727.4459999999999" stroke="#e3e3e3" stroke-width="1" />
<line x1="119" y1="720.972" x2="121.8" y2="720.972" stroke="#e3e3e3" stroke-width="1" />
<line x1="119" y1="714.498" x2="121.8" y2="714.498" stroke="#e3e3e3" stroke-width="1" />
<line x1="119" y1="708.024" x2="121.8" y2="708.024" stroke="#e3e3e3" stroke-width="1" />
<line x1="119" y1="695.076" x2="121.8" y2="695.076" stroke="#e3e3e3" stroke-width="1" />
<line x1="119" y1="688.602" x2="121.8" y2="688.602" stroke="#e3e3e3" stroke-width="1" />
<line x1="119" y1="682.1279999999999" x2="121.8" y2="682.1279999999999" stroke="#e3e3e3" stroke-width="1" />
<line x1="119" y1="675.654" x2="121.8" y2="675.654" stroke="#e3e3e3" stroke-width="1" />
<line x1="119" y1="662.706" x2="121.8" y2="662.706" stroke="#e3e3e3" stroke-width="1" />
<line x1="119" y1="656.232" x2="121.8" y2="656.232" stroke="#e3e3e3" stroke-width="1" />
<line x1="119" y1="649.758" x2="121.8" y2="649.758" stroke="#e3e3e3" stroke-width="1" />
<line x1="119" y1="643.284" x2="121.8" y2="643.284" stroke="#e3e3e3" stroke-width="1" />
<line x1="119" y1="630.336" x2="121.8" y2="630.336" stroke="#e3e3e3" stroke-width="1" />
<line x1="119" y1="623.862" x2="121.8" y2="623.862" stroke="#e3e3e3" stroke-width="1" />
<line x1="119" y1="617.3879999999999" x2="121.8" y2="617.3879999999999" stroke="#e3e3e3" stroke-width="1" />
<line x1="119" y1="610.914" x2="121.8" y2="610.914" stroke="#e3e3e3" stroke-width="1" />
<line x1="119" y1="597.966" x2="121.8" y2="597.966" stroke="#e3e3e3" stroke-width="1" />
<line x1="119" y1="591.492" x2="121.8" y2="591.492" stroke="#e3e3e3" stroke-width="1" />
<line x1="119" y1="585.018" x2="121.8" y2="585.018" stroke="#e3e3e3" stroke-width="1" />
<line x1="119" y1="578.544" x2="121.8" y2="578.544" stroke="#e3e3e3" stroke-width="1" />
<line x1="119" y1="565.596" x2="121.8" y2="565.596" stroke="#e3e3e3" stroke-width="1" />
<line x1="119" y1="559.1220000000001" x2="121.8" y2="559.1220000000001" stroke="#e3e3e3" stroke-width="1" />
<line x1="119" y1="552.6479999999999" x2="121.8" y2="552.6479999999999" stroke="#e3e3e3" stroke-width="1" />
<line x1="119" y1="546.174" x2="121.8" y2="546.174" stroke="#e3e3e3" stroke-width="1" />
<line x1="119" y1="533.226" x2="121.8" y2="533.226" stroke="#e3e3e3" stroke-width="1" />
<line x1="119" y1="526.752" x2="121.8" y2="526.752" stroke="#e3e3e3" stroke-width="1" />
<line x1="119" y1="520.278" x2="121.8" y2="520.278" stroke="#e3e3e3" stroke-width="1" />
<line x1="119" y1="513.804" x2="121.8" y2="513.804" stroke="#e3e3e3" stroke-width="1" />
<line x1="119" y1="500.856" x2="121.8" y2="500.856" stroke="#e3e3e3" stroke-width="1" />
<line x1="119" y1="494.382" x2="121.8" y2="494.382" stroke="#e3e3e3" stroke-width="1" />
<line x1="119" y1="487.908" x2="121.8" y2="487.908" stroke="#e3e3e3" stroke-width="1" />
<line x1="119" y1="481.43399999999997" x2="121.8" y2="481.43399999999997" stroke="#e3e3e3" stroke-width="1" />
<line x1="119" y1="468.486" x2="121.8" y2="468.486" stroke="#e3e3e3" stroke-width="1" />
<line x1="119" y1="462.012" x2="121.8" y2="462.012" stroke="#e3e3e3" stroke-width="1" />
<line x1="119" y1="455.538" x2="121.8" y2="455.538" stroke="#e3e3e3" stroke-width="1" />
<line x1="119" y1="449.064" x2="121.8" y2="449.064" stroke="#e3e3e3" stroke-width="1" />
<line x1="121.8" y1="438.5" x2="121.8" y2="863.5" stroke="#e3e3e3" stroke-width="1" />
<line x1="121.5" y1="863.5" x2="640.5" y2="863.5" stroke="#dcdcdc" stroke-width="1" />
<rect x="134" y="477.22589999999997" width="26" height="386.27410000000003" fill="#2e7f92" />
<line x1="147" y1="467.22589999999997" x2="147" y2="477.22589999999997" stroke="#c8c8c8" stroke-width="1" />
<rect x="128.0" y="452.22589999999997" width="38" height="15" fill="#fff" stroke="#d0d0d0" stroke-width="1" />
<text x="147" y="463.72589999999997" font-size="11" fill="#262626" stroke="#262626" stroke-width="0.1" text-anchor="middle" textLength="33" lengthAdjust="spacingAndGlyphs" >119,3K</text>
<rect x="186" y="716.7638999999999" width="26" height="146.73610000000005" fill="#eda600" />
<line x1="199" y1="706.7638999999999" x2="199" y2="716.7638999999999" stroke="#c8c8c8" stroke-width="1" />
<rect x="183.5" y="691.7638999999999" width="31" height="15" fill="#fff" stroke="#d0d0d0" stroke-width="1" />
<text x="199" y="703.2638999999999" font-size="11" fill="#262626" stroke="#262626" stroke-width="0.1" text-anchor="middle" textLength="27" lengthAdjust="spacingAndGlyphs" >45,3K</text>
<rect x="238" y="720.0009" width="26" height="143.49909999999997" fill="#ae252a" />
<line x1="251" y1="710.0009" x2="251" y2="720.0009" stroke="#c8c8c8" stroke-width="1" />
<rect x="235.5" y="695.0009" width="31" height="15" fill="#fff" stroke="#d0d0d0" stroke-width="1" />
<text x="251" y="706.5009" font-size="11" fill="#262626" stroke="#262626" stroke-width="0.1" text-anchor="middle" textLength="27" lengthAdjust="spacingAndGlyphs" >44,3K</text>
<rect x="290" y="732.3015" width="26" height="131.19849999999994" fill="#78982e" />
<line x1="303" y1="722.3015" x2="303" y2="732.3015" stroke="#c8c8c8" stroke-width="1" />
<rect x="287.5" y="707.3015" width="31" height="15" fill="#fff" stroke="#d0d0d0" stroke-width="1" />
<text x="303" y="718.8015" font-size="11" fill="#262626" stroke="#262626" stroke-width="0.1" text-anchor="middle" textLength="27" lengthAdjust="spacingAndGlyphs" >40,5K</text>
<rect x="342" y="768.2321999999999" width="26" height="95.26780000000005" fill="#853c05" />
<line x1="355" y1="758.2321999999999" x2="355" y2="768.2321999999999" stroke="#c8c8c8" stroke-width="1" />
<rect x="339.5" y="743.2321999999999" width="31" height="15" fill="#fff" stroke="#d0d0d0" stroke-width="1" />
<text x="355" y="754.7321999999999" font-size="11" fill="#262626" stroke="#262626" stroke-width="0.1" text-anchor="middle" textLength="27" lengthAdjust="spacingAndGlyphs" >29,4K</text>
<rect x="394" y="779.8854" width="26" height="83.61459999999997" fill="#3d4f7d" />
<line x1="407" y1="769.8854" x2="407" y2="779.8854" stroke="#c8c8c8" stroke-width="1" />
<rect x="391.5" y="754.8854" width="31" height="15" fill="#fff" stroke="#d0d0d0" stroke-width="1" />
<text x="407" y="766.3854" font-size="11" fill="#262626" stroke="#262626" stroke-width="0.1" text-anchor="middle" textLength="27" lengthAdjust="spacingAndGlyphs" >25,8K</text>
<rect x="446" y="791.8623" width="26" height="71.63769999999997" fill="#88c6d8" />
<line x1="459" y1="781.8623" x2="459" y2="791.8623" stroke="#c8c8c8" stroke-width="1" />
<rect x="443.5" y="766.8623" width="31" height="15" fill="#fff" stroke="#d0d0d0" stroke-width="1" />
<text x="459" y="778.3623" font-size="11" fill="#262626" stroke="#262626" stroke-width="0.1" text-anchor="middle" textLength="27" lengthAdjust="spacingAndGlyphs" >22,1K</text>
<rect x="498" y="814.5213" width="26" height="48.97869999999998" fill="#fedb8a" />
<line x1="511" y1="804.5213" x2="511" y2="814.5213" stroke="#c8c8c8" stroke-width="1" />
<rect x="495.5" y="789.5213" width="31" height="15" fill="#fff" stroke="#d0d0d0" stroke-width="1" />
<text x="511" y="801.0213" font-size="11" fill="#262626" stroke="#262626" stroke-width="0.1" text-anchor="middle" textLength="27" lengthAdjust="spacingAndGlyphs" >15,1K</text>
<rect x="550" y="819.0531" width="26" height="44.44690000000001" fill="#e38a89" />
<line x1="563" y1="809.0531" x2="563" y2="819.0531" stroke="#c8c8c8" stroke-width="1" />
<rect x="547.5" y="794.0531" width="31" height="15" fill="#fff" stroke="#d0d0d0" stroke-width="1" />
<text x="563" y="805.5531" font-size="11" fill="#262626" stroke="#262626" stroke-width="0.1" text-anchor="middle" textLength="27" lengthAdjust="spacingAndGlyphs" >13,7K</text>
<rect x="602" y="822.9375" width="26" height="40.56249999999998" fill="#bcd983" />
<line x1="615" y1="812.9375" x2="615" y2="822.9375" stroke="#c8c8c8" stroke-width="1" />
<rect x="599.5" y="797.9375" width="31" height="15" fill="#fff" stroke="#d0d0d0" stroke-width="1" />
<text x="615" y="809.4375" font-size="11" fill="#262626" stroke="#262626" stroke-width="0.1" text-anchor="middle" textLength="27" lengthAdjust="spacingAndGlyphs" >12,5K</text>
<rect x="651.5" y="438.5" width="234" height="195" fill="#fff" stroke="#dedede" stroke-width="1" />
<rect x="661.5" y="448.7" width="17" height="13" fill="#2e7f92" stroke="rgba(0,0,0,0.18)" stroke-width="1" />
<text x="684.6" y="458.9" font-size="11" fill="#262626" stroke="#262626" stroke-width="0.1" textLength="130.0" lengthAdjust="spacingAndGlyphs" >PEREIRA - ALBUQUERQUE</text>
<rect x="661.5" y="466.7" width="17" height="13" fill="#eda600" stroke="rgba(0,0,0,0.18)" stroke-width="1" />
<text x="684.6" y="476.9" font-size="11" fill="#262626" stroke="#262626" stroke-width="0.1" textLength="80.39999999999999" lengthAdjust="spacingAndGlyphs" >MELO - FRANCO</text>
<rect x="661.5" y="484.7" width="17" height="13" fill="#ae252a" stroke="rgba(0,0,0,0.18)" stroke-width="1" />
<text x="684.6" y="494.9" font-size="11" fill="#262626" stroke="#262626" stroke-width="0.1" textLength="177.2" lengthAdjust="spacingAndGlyphs" >BRAGA, NOGUEIRA AND CARVALHO</text>
<rect x="661.5" y="502.7" width="17" height="13" fill="#78982e" stroke="rgba(0,0,0,0.18)" stroke-width="1" />
<text x="684.6" y="512.9" font-size="11" fill="#262626" stroke="#262626" stroke-width="0.1" textLength="149.0" lengthAdjust="spacingAndGlyphs" >OLIVEIRA, REIS AND MORAES</text>
<rect x="661.5" y="520.7" width="17" height="13" fill="#853c05" stroke="rgba(0,0,0,0.18)" stroke-width="1" />
<text x="684.6" y="530.9" font-size="11" fill="#262626" stroke="#262626" stroke-width="0.1" textLength="84.89999999999999" lengthAdjust="spacingAndGlyphs" >OLIVEIRA EIRELI</text>
<rect x="661.5" y="538.7" width="17" height="13" fill="#3d4f7d" stroke="rgba(0,0,0,0.18)" stroke-width="1" />
<text x="684.6" y="548.9" font-size="11" fill="#262626" stroke="#262626" stroke-width="0.1" textLength="85.1" lengthAdjust="spacingAndGlyphs" >MARTINS - MELO</text>
<rect x="661.5" y="556.7" width="17" height="13" fill="#88c6d8" stroke="rgba(0,0,0,0.18)" stroke-width="1" />
<text x="684.6" y="566.9" font-size="11" fill="#262626" stroke="#262626" stroke-width="0.1" textLength="173.4" lengthAdjust="spacingAndGlyphs" >SARAIVA, MARTINS AND OLIVEIRA</text>
<rect x="661.5" y="574.7" width="17" height="13" fill="#fedb8a" stroke="rgba(0,0,0,0.18)" stroke-width="1" />
<text x="684.6" y="584.9" font-size="11" fill="#262626" stroke="#262626" stroke-width="0.1" textLength="88.39999999999999" lengthAdjust="spacingAndGlyphs" >REIS - NOGUEIRA</text>
<rect x="661.5" y="592.7" width="17" height="13" fill="#e38a89" stroke="rgba(0,0,0,0.18)" stroke-width="1" />
<text x="684.6" y="602.9" font-size="11" fill="#262626" stroke="#262626" stroke-width="0.1" textLength="78.19999999999999" lengthAdjust="spacingAndGlyphs" >OLIVEIRA LTDA</text>
<rect x="661.5" y="610.7" width="17" height="13" fill="#bcd983" stroke="rgba(0,0,0,0.18)" stroke-width="1" />
<text x="684.6" y="620.9" font-size="11" fill="#262626" stroke="#262626" stroke-width="0.1" textLength="191.2" lengthAdjust="spacingAndGlyphs" >COSTA, ALBUQUERQUEAND MARTINS</text>
<path d="M1046,392.5 L1505.5,392.5 Q1509.5,392.5 1509.5,396.5 L1509.5,602.5 Q1509.5,606.5 1505.5,606.5 L923.5,606.5 Q919.5,606.5 919.5,602.5 L919.5,396.5 Q919.5,392.5 923.5,392.5 L930,392.5" fill="none" stroke="#d5d5d5" stroke-width="1" />
<text x="934.7" y="396.6" font-size="11.5" fill="#1f1f1f" stroke="#1f1f1f" stroke-width="0.17" textLength="105.2" lengthAdjust="spacingAndGlyphs" >Maiores faturamentos</text>
<rect x="926" y="410.5" width="577" height="22.5" fill="#ebebeb" />
<path d="M926.5,433 L926.5,414.5 Q926.5,410.5 930.5,410.5 L1013.5,410.5 Q1017.5,410.5 1017.5,414.5 L1017.5,433" fill="#ececec" stroke="#2a6fc9" stroke-width="1.2" />
<ellipse cx="943.8" cy="420.3" rx="2.6" ry="3.1" fill="#7d8387"/>
<path d="M940.5,429.5 C940.5,425.5 942,424.5 944,424.5 C946.5,424.5 948.5,425.5 948.5,429.5 Z" fill="#7d8387" />
<ellipse cx="938.3" cy="423.3" rx="2.7" ry="3.2" fill="#4a5055"/>
<path d="M933.8,432 C933.8,428 935.5,427 938.3,427 C941.2,427 942.8,428 942.8,432 Z" fill="#4a5055" />
<text x="953.4" y="428.5" font-size="12" fill="#1f1f1f" stroke="#1f1f1f" stroke-width="0.17" textLength="57.9" lengthAdjust="spacingAndGlyphs" >Por Cliente</text>
<polygon points="1037.11,428.26 1036.83,429.18 1035.21,429.24 1034.77,429.77 1035.02,431.37 1034.18,431.83 1032.98,430.73 1032.30,430.80 1031.34,432.11 1030.42,431.83 1030.36,430.21 1029.83,429.77 1028.23,430.02 1027.77,429.18 1028.87,427.98 1028.80,427.30 1027.49,426.34 1027.77,425.42 1029.39,425.36 1029.83,424.83 1029.58,423.23 1030.42,422.77 1031.62,423.87 1032.30,423.80 1033.26,422.49 1034.18,422.77 1034.24,424.39 1034.77,424.83 1036.37,424.58 1036.83,425.42 1035.73,426.62 1035.80,427.30" fill="#50565b"/>
<circle cx="1032.3" cy="427.3" r="1.6" fill="#ebebeb"/>
<polygon points="1043.23,421.06 1043.00,421.79 1041.73,421.86 1041.38,422.28 1041.57,423.54 1040.89,423.90 1039.95,423.05 1039.40,423.10 1038.64,424.13 1037.91,423.90 1037.84,422.63 1037.42,422.28 1036.16,422.47 1035.80,421.79 1036.65,420.85 1036.60,420.30 1035.57,419.54 1035.80,418.81 1037.07,418.74 1037.42,418.32 1037.23,417.06 1037.91,416.70 1038.85,417.55 1039.40,417.50 1040.16,416.47 1040.89,416.70 1040.96,417.97 1041.38,418.32 1042.64,418.13 1043.00,418.81 1042.15,419.75 1042.20,420.30" fill="#50565b"/>
<circle cx="1039.4" cy="420.3" r="1.3" fill="#ebebeb"/>
<text x="1047.2" y="428.5" font-size="12" fill="#1f1f1f" stroke="#1f1f1f" stroke-width="0.17" textLength="68" lengthAdjust="spacingAndGlyphs" >Por Processo</text>
<rect x="1133" y="420.5" width="12" height="2" fill="#1f67c8" />
<rect x="1133" y="424.5" width="12" height="2" fill="#1f67c8" />
<rect x="1133" y="428.5" width="12" height="2" fill="#1f67c8" />
<text x="1151" y="428.5" font-size="12" fill="#1f1f1f" stroke="#1f1f1f" stroke-width="0.17" textLength="125.7" lengthAdjust="spacingAndGlyphs" >Classificação do Cliente</text>
<rect x="1294" y="420.5" width="12" height="2" fill="#1f67c8" />
<rect x="1294" y="424.5" width="12" height="2" fill="#1f67c8" />
<rect x="1294" y="428.5" width="12" height="2" fill="#1f67c8" />
<text x="1312.4" y="429" font-size="12" fill="#1f1f1f" stroke="#1f1f1f" stroke-width="0.17" textLength="130.5" lengthAdjust="spacingAndGlyphs" >Classificação do Produto</text>
<rect x="926.5" y="439.5" width="576" height="161" fill="#f9f9f9" stroke="#d9d9d9" stroke-width="1" />
<rect x="927" y="468" width="558.5" height="83" fill="#fff" />
<rect x="927" y="468" width="558.5" height="29.7" fill="#e5e5e5" />
<line x1="927" y1="467.5" x2="1502" y2="467.5" stroke="#e6e6e6" stroke-width="1" />
<line x1="1335.5" y1="440" x2="1335.5" y2="551" stroke="#e6e6e6" stroke-width="1" />
<line x1="1485.5" y1="440" x2="1485.5" y2="468" stroke="#e6e6e6" stroke-width="1" />
<line x1="927" y1="526" x2="1485.5" y2="526" stroke="#e6e6e6" stroke-width="1" />
<line x1="927" y1="551" x2="1502" y2="551" stroke="#e0e0e0" stroke-width="1" />
<rect x="1486" y="468" width="16" height="83" fill="#f0f0f0" />
<rect x="1492" y="486" width="3" height="17" fill="#8a8a8a" rx="1.5" />
<text x="933.5" y="457.6" font-size="11.5" fill="#1f1f1f" stroke="#1f1f1f" stroke-width="0.17" textLength="27.8" lengthAdjust="spacingAndGlyphs" >Nome</text>
<text x="1342.9" y="458.4" font-size="11.5" fill="#1f1f1f" stroke="#1f1f1f" stroke-width="0.17" textLength="24.5" lengthAdjust="spacingAndGlyphs" >Total</text>
<text x="933.2" y="486.9" font-size="11" fill="#1e1e1e" stroke="#1e1e1e" stroke-width="0.1" textLength="127.3" lengthAdjust="spacingAndGlyphs" >PEREIRA - ALBUQUERQUE</text>
<text x="933.2" y="516" font-size="11" fill="#1e1e1e" stroke="#1e1e1e" stroke-width="0.1" textLength="79.6" lengthAdjust="spacingAndGlyphs" >MELO - FRANCO</text>
<text x="933.2" y="544.8" font-size="11" fill="#1e1e1e" stroke="#1e1e1e" stroke-width="0.1" textLength="175.3" lengthAdjust="spacingAndGlyphs" >BRAGA, NOGUEIRA AND CARVALHO</text>
<text x="1478" y="487.1" font-size="11" fill="#1e1e1e" stroke="#1e1e1e" stroke-width="0.1" text-anchor="end" textLength="72.5" lengthAdjust="spacingAndGlyphs" >R$ 119.346,52</text>
<text x="1478" y="515.8" font-size="11" fill="#1e1e1e" stroke="#1e1e1e" stroke-width="0.1" text-anchor="end" textLength="66.5" lengthAdjust="spacingAndGlyphs" >R$ 45.282,40</text>
<text x="1478" y="544.8" font-size="11" fill="#1e1e1e" stroke="#1e1e1e" stroke-width="0.1" text-anchor="end" textLength="66.5" lengthAdjust="spacingAndGlyphs" >R$ 44.297,16</text>
<rect x="1338" y="560.8" width="146" height="30.2" fill="#fff" stroke="#e3e3e3" stroke-width="1" rx="3" />
<text x="1473.4" y="580.3" font-size="11" fill="#1e1e1e" stroke="#1e1e1e" stroke-width="0.1" text-anchor="end" textLength="72.5" lengthAdjust="spacingAndGlyphs" >R$ 367.986,56</text>
<path d="M1072,624.5 L1505.5,624.5 Q1509.5,624.5 1509.5,628.5 L1509.5,888.5 Q1509.5,892.5 1505.5,892.5 L923.5,892.5 Q919.5,892.5 919.5,888.5 L919.5,628.5 Q919.5,624.5 923.5,624.5 L930,624.5" fill="none" stroke="#d5d5d5" stroke-width="1" />
<text x="934.5" y="628.9" font-size="11.5" fill="#1f1f1f" stroke="#1f1f1f" stroke-width="0.17" textLength="130.9" lengthAdjust="spacingAndGlyphs" >Faturamento por segmento</text>
<rect x="926.5" y="642.5" width="575.5" height="242.5" fill="#fff" stroke="#d0d0d0" stroke-width="1" />
<path d="M1120.5,764.5 L1233.50,764.50 A113,113 0 0 0 1007.52,762.62 Z" fill="#3a8fa6" stroke="rgba(255,255,255,0.5)" stroke-width="0.6" />
<path d="M1120.5,764.5 L1007.52,762.62 A113,113 0 0 0 1113.60,877.29 Z" fill="#fdb50f" stroke="rgba(255,255,255,0.5)" stroke-width="0.6" />
<path d="M1120.5,764.5 L1113.60,877.29 A113,113 0 0 0 1214.16,827.73 Z" fill="#c12a2e" stroke="rgba(255,255,255,0.5)" stroke-width="0.6" />
<path d="M1120.5,764.5 L1214.16,827.73 A113,113 0 0 0 1232.26,781.20 Z" fill="#86a935" stroke="rgba(255,255,255,0.5)" stroke-width="0.6" />
<path d="M1120.5,764.5 L1232.26,781.20 A113,113 0 0 0 1233.37,769.89 Z" fill="#8f3e05" stroke="rgba(255,255,255,0.5)" stroke-width="0.6" />
<path d="M1120.5,764.5 L1233.37,769.89 A113,113 0 0 0 1233.50,764.50 Z" fill="#475a92" stroke="rgba(255,255,255,0.5)" stroke-width="0.6" />
<rect x="1314.5" y="653.5" width="177" height="123" fill="#fff" stroke="#dedede" stroke-width="1" />
<path d="M1324.5,663.5 A18,14 0 0 1 1342.5,677.5 L1324.5,677.5 Z" fill="#3a8fa6" />
<text x="1347.5" y="674.1" font-size="11" fill="#262626" stroke="#262626" stroke-width="0.1" textLength="118.0" lengthAdjust="spacingAndGlyphs" >ATACADISTAS - 49,73%</text>
<path d="M1324.5,681.5 A18,14 0 0 1 1342.5,695.5 L1324.5,695.5 Z" fill="#fdb50f" />
<text x="1347.5" y="692.1" font-size="11" fill="#262626" stroke="#262626" stroke-width="0.1" textLength="96.39999999999999" lengthAdjust="spacingAndGlyphs" >REVENDA - 24,29%</text>
<path d="M1324.5,699.5 A18,14 0 0 1 1342.5,713.5 L1324.5,713.5 Z" fill="#c12a2e" />
<text x="1347.5" y="710.1" font-size="11" fill="#262626" stroke="#262626" stroke-width="0.1" textLength="134.2" lengthAdjust="spacingAndGlyphs" >CLIENTES FINAIS - 16,52%</text>
<path d="M1324.5,717.5 A18,14 0 0 1 1342.5,731.5 L1324.5,731.5 Z" fill="#86a935" />
<text x="1347.5" y="728.1" font-size="11" fill="#262626" stroke="#262626" stroke-width="0.1" textLength="130.1" lengthAdjust="spacingAndGlyphs" >DISTRIBUIDORES - 7,09%</text>
<path d="M1324.5,735.5 A18,14 0 0 1 1342.5,749.5 L1324.5,749.5 Z" fill="#8f3e05" />
<text x="1347.5" y="746.1" font-size="11" fill="#262626" stroke="#262626" stroke-width="0.1" textLength="102.1" lengthAdjust="spacingAndGlyphs" >MOVELEIRO - 1,60%</text>
<path d="M1324.5,753.5 A18,14 0 0 1 1342.5,767.5 L1324.5,767.5 Z" fill="#475a92" />
<text x="1347.5" y="764.1" font-size="11" fill="#262626" stroke="#262626" stroke-width="0.1" textLength="102.1" lengthAdjust="spacingAndGlyphs" >LICITACOES - 0,76%</text>
<rect x="2" y="907" width="1521" height="36" fill="#fafafa" />
<line x1="0" y1="943.5" x2="1525" y2="943.5" stroke="#c6c6c6" stroke-width="1" />
<line x1="1.5" y1="112" x2="1.5" y2="944" stroke="#cfcfcf" stroke-width="1" />
<line x1="1523.5" y1="112" x2="1523.5" y2="944" stroke="#cfcfcf" stroke-width="1" />
<line x1="1.5" y1="906.5" x2="1523.5" y2="906.5" stroke="#cfcfcf" stroke-width="1" />
<path d="M0,0 L3,0 L0,3 Z" fill="#2a2a2a" />
<path d="M1525,0 L1522,0 L1525,3 Z" fill="#2a2a2a" />
<rect x="0" y="943" width="1.5" height="1" fill="#555" />
<rect x="1523.5" y="943" width="1.5" height="1" fill="#555" />
</svg></body></html>
